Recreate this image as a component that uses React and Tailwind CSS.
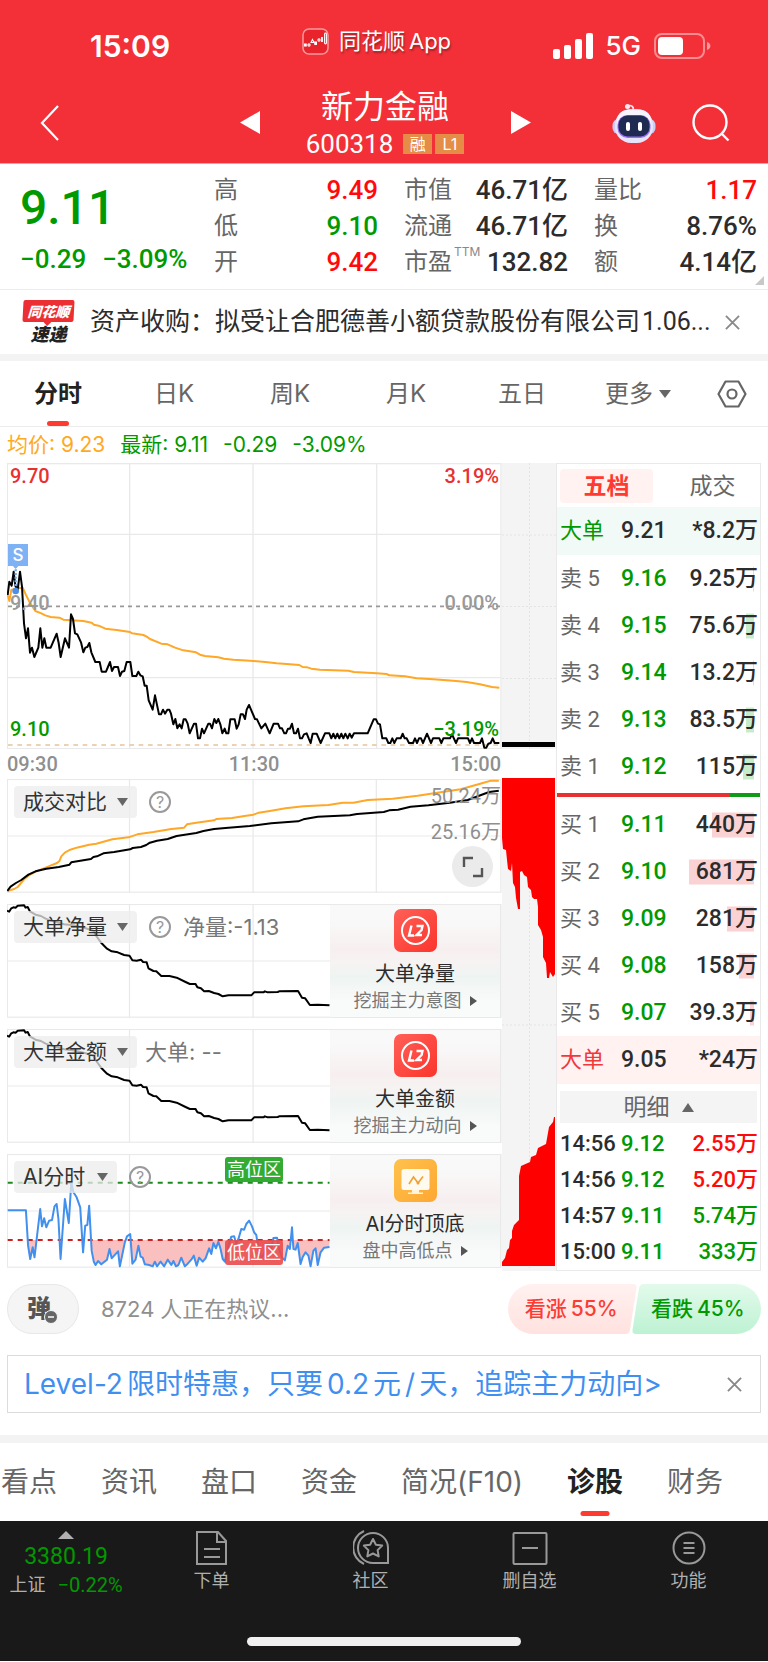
import React from "react";

const NUM = "font-['Roboto','Noto_Sans_CJK_SC',sans-serif]";

const PRICE_LINE =
  "23,420 28,380 35,392 41,350 46,392 53,405 60,350 66,395 72,505 78,550 84,520 90,593 96,578 103,606 115,578 121,520 127,578 133,550 139,578 152,578 170,536 176,564 182,606 195,550 201,564 207,578 213,478 219,492 225,535 232,538 243,562 250,592 256,578 262,576 268,564 274,592 286,621 299,621 305,650 318,650 330,621 336,648 342,636 354,636 360,663 366,650 373,648 380,621 391,621 397,663 409,663 415,650 421,661 428,664 434,692 440,692 446,736 458,764 465,721 477,778 483,778 489,764 495,776 502,764 508,764 513,776 520,808 526,792 532,820 539,808 545,820 551,793 557,793 563,806 569,835 582,806 588,806 594,850 600,850 606,821 612,835 625,806 630,806 636,820 643,792 649,804 655,792 661,808 667,835 674,821 679,835 685,835 691,793 704,793 710,821 716,808 722,778 729,778 735,792 740,764 747,750 753,764 765,792 771,793 784,820 796,806 809,835 821,806 834,806 840,820 846,820 853,835 858,835 864,821 870,821 876,806 882,835 888,835 894,821 900,850 906,850 912,838 920,835 926,850 932,864 938,836 950,836 962,864 975,835 988,835 994,850 1000,836 1006,850 1012,836 1018,850 1024,836 1030,850 1036,836 1043,850 1049,836 1055,848 1062,835 1103,835 1121,793 1128,793 1134,806 1140,808 1147,850 1159,850 1165,864 1171,864 1177,850 1183,864 1190,850 1202,850 1208,836 1214,850 1220,850 1227,864 1239,864 1245,850 1251,864 1257,850 1263,850 1269,864 1281,836 1293,864 1299,850 1318,850 1324,864 1330,850 1350,850 1356,838 1368,864 1374,850 1404,850 1410,864 1416,850 1422,864 1440,864 1446,850 1453,878 1459,878 1465,866 1472,864 1478,850 1484,864 1498,864";
const AVG_LINE =
  "23,420 28,438 34,405 48,400 68,398 78,420 88,440 106,468 124,475 136,481 152,486 178,488 190,494 215,496 250,498 275,503 282,509 296,512 316,521 350,525 390,531 396,535 430,540 440,545 450,552 484,566 503,568 525,578 550,586 588,592 600,599 615,603 655,607 672,611 700,614 750,617 796,621 830,625 860,627 898,630 908,636 922,637 934,641 960,644 1045,647 1062,651 1130,655 1160,657 1168,661 1215,664 1250,670 1300,673 1360,677 1400,681 1440,688 1476,696 1498,698";
const DEAL_BLACK =
  "21,362 30,349 45,338 60,329 80,313 100,303 130,295 165,290 195,283 200,276 255,266 262,260 272,258 290,249 320,245 365,237 372,233 395,230 410,224 420,217 440,211 470,206 495,197 550,188 570,182 600,176 640,172 700,167 760,159 835,153 850,147 890,139 980,135 1000,131 1075,125 1090,120 1115,118 1150,109 1200,105 1260,97 1310,89 1340,77 1370,65 1397,61";
const DEAL_AMBER =
  "21,362 40,356 50,350 68,327 80,316 100,304 130,291 160,278 167,272 172,258 182,247 195,239 215,232 250,223 270,220 315,207 360,201 385,192 430,185 480,176 516,172 524,162 550,157 600,150 606,146 650,143 690,136 710,133 725,127 760,121 800,114 850,108 920,104 960,97 990,97 1030,89 1100,85 1170,76 1220,68 1290,57 1320,48 1350,39 1375,31 1397,31";
const NET_LINE =
  "20,20 26,23 32,13 38,10 44,11 50,5 68,4 72,11 78,9 84,22 100,32 115,36 128,44 150,52 180,61 205,64 240,73 262,80 270,96 285,118 300,134 313,142 330,145 348,153 363,155 371,169 383,170 395,167 401,174 411,175 416,193 430,201 438,202 452,216 475,216 495,221 520,234 532,240 548,240 553,250 563,253 572,262 585,261 600,267 612,270 624,277 640,274 704,274 712,265 738,265 742,262 750,265 778,264 782,262 835,261 846,281 855,283 868,303 890,302 923,304";
const AI_LINE =
  "22,574 73,574 79,680 85,720 92,685 97,715 113,570 118,622 124,598 130,625 138,605 146,603 153,562 159,555 164,600 170,720 182,540 193,612 200,490 206,520 215,535 225,565 233,700 239,620 245,618 250,560 257,695 263,728 268,738 275,726 284,736 291,730 300,722 307,690 313,718 320,710 331,697 336,742 343,706 350,670 356,652 365,645 371,734 380,722 388,680 394,713 400,716 406,736 418,738 428,742 434,728 440,742 450,728 460,742 470,722 480,738 486,726 493,742 500,738 508,716 518,742 526,734 536,722 543,710 551,740 558,716 568,728 576,718 586,688 592,705 598,672 605,688 612,668 618,690 624,720 630,728 640,680 648,653 656,652 662,675 668,660 676,630 684,632 690,615 698,605 706,622 712,640 718,648 724,690 732,720 742,700 750,676 760,690 766,657 776,656 782,690 790,715 798,724 806,680 812,690 818,625 822,690 828,692 834,672 842,735 848,714 856,700 864,710 870,742 878,695 884,688 890,738 898,700 908,686 923,684";
const FLOW_DOWN =
  "502,778 555,778 555,974 553,977 550,972 549,978 547,978 546,963 543,957 543,937 541,930 538,925 538,907 537,899 534,899 532,897 531,890 528,887 527,877 524,875 522,871 520,872 520,909 518,909 516,898 515,887 513,883 512,863 511,871 508,869 507,860 506,850 503,849 502,838";
const FLOW_UP =
  "502,1266 555,1266 555,1117 554,1117 553,1122 549,1127 546,1144 538,1148 536,1155 531,1157 530,1162 521,1166 519,1176 519,1220 517,1222 514,1225 512,1231 512,1238 510,1240 509,1248 507,1250 505,1258 502,1262";

function Line({ points, color, width = 2, dash }) {
  return (
    <polyline points={points} fill="none" stroke={color} strokeWidth={width} strokeDasharray={dash} strokeLinejoin="round" vectorEffect="non-scaling-stroke" />
  );
}

function Triangle({ className, points }) {
  return (
    <svg viewBox="0 0 12 12" preserveAspectRatio="none" className={className} aria-hidden="true">
      <polygon points={points} fill="currentColor" />
    </svg>
  );
}
const DOWN = "0,0 12,0 6,12";
const UP = "0,12 12,12 6,0";
const RIGHT = "0,0 12,6 0,12";
const LEFT = "12,0 12,12 0,6";

function Cross({ className }) {
  return (
    <svg viewBox="0 0 16 16" className={className} fill="none" stroke="currentColor" strokeWidth="2" aria-hidden="true">
      <path d="M1 1 15 15M15 1 1 15" />
    </svg>
  );
}

function Header() {
  return (
    <header className="border-b border-[#f0a5a5] bg-[#f33038] text-white">
      <div className="flex h-[82px] items-center pt-[10px]">
        <div className="flex-1 pl-[90px] font-['Inter',sans-serif] text-[30px] leading-9 font-semibold">15:09</div>
        <div className="flex items-center gap-[10px] pr-12 pb-[10px]">
          <svg viewBox="0 0 27 27" className="size-[27px]" aria-hidden="true">
            <rect x="1" y="1" width="25" height="25" rx="6" fill="#e8232b" stroke="#f79a9d" strokeWidth="1.5" />
            <g fill="none" stroke="#fff" strokeWidth="1.1">
              <rect x="2.6" y="16" width="1.6" height="2" fill="#fff" />
              <circle cx="7" cy="17" r="1.1" />
              <path d="M9 14.5 10.5 11.5 12 14.5Z" />
              <rect x="12.8" y="14" width="1.6" height="2.4" fill="#fff" />
              <circle cx="17" cy="12" r="1.1" />
              <path d="M20 9v5" strokeWidth="1.8" />
              <rect x="22.6" y="5" width="1.8" height="11" rx=".9" />
            </g>
          </svg>
          <span className="flex gap-1 font-['Inter','Noto_Sans_CJK_SC',sans-serif] text-[22px] leading-7 [text-shadow:1px_2px_2px_rgb(0_0_0/0.35)]">
            同花顺<span>App</span>
          </span>
        </div>
        <div className="flex flex-1 items-center justify-end gap-[13px] pr-[57px]">
          <svg viewBox="0 0 40 26" className="h-[26px] w-10" fill="#fff" aria-hidden="true">
            <rect x="0" y="16" width="7" height="10" rx="2" />
            <rect x="11" y="12" width="7" height="14" rx="2" />
            <rect x="22" y="6" width="7" height="20" rx="2" />
            <rect x="33" y="0" width="7" height="26" rx="2" />
          </svg>
          <span className="font-['Inter',sans-serif] text-[26px] leading-8 font-medium">5G</span>
          <svg viewBox="0 0 57 26" className="h-[26px] w-[57px]" aria-hidden="true">
            <rect x="1" y="1" width="49" height="24" rx="7" fill="none" stroke="#fff" strokeOpacity=".45" strokeWidth="2" />
            <rect x="4" y="4" width="25" height="18" rx="4" fill="#fff" />
            <path d="M53 9c2.4.8 3.4 2.2 3.4 4s-1 3.200-3.400 4z" fill="#fff" fillOpacity=".5" />
          </svg>
        </div>
      </div>
      <div className="flex h-[81px] items-center">
        <div className="flex-1 pl-10">
          <button type="button" aria-label="返回" className="block">
            <svg viewBox="0 0 19 36" className="h-9 w-[19px]" fill="none" stroke="#fff" strokeWidth="2.200">
              <path d="M18 1 2 18 18 35" />
            </svg>
          </button>
        </div>
        <button type="button" aria-label="上一只">
          <Triangle points={LEFT} className="h-[23px] w-5" />
        </button>
        <div className="flex w-[251px] flex-col items-center gap-[2px]">
          <h1 className="font-['Noto_Sans_CJK_SC',sans-serif] text-[32px] leading-10">新力金融</h1>
          <div className="flex items-center gap-[10px]">
            <span className={`${NUM} text-[26px] leading-9`}>600318</span>
            <span className="flex gap-[3px] font-['Inter','Noto_Sans_CJK_SC',sans-serif] text-base leading-5">
              <span className="w-[29px] bg-[#e58c47] text-center">融</span>
              <span className="w-[29px] bg-[#e58c47] text-center">L1</span>
            </span>
          </div>
        </div>
        <button type="button" aria-label="下一只">
          <Triangle points={RIGHT} className="h-[23px] w-5" />
        </button>
        <div className="flex flex-1 items-center justify-end gap-9 pr-[38px]">
          <button type="button" aria-label="智能助手">
            <svg viewBox="0 0 44 40" className="h-10 w-11">
              <path d="M15 3.500C19 1.500 21.500 3 21.500 7" fill="none" stroke="#f3dfee" strokeWidth="1.800" />
              <circle cx="15.500" cy="3.500" r="2.500" fill="#fbe9f2" />
              <rect x=".5" y="16" width="43" height="15" rx="6" fill="#c9cdf3" />
              <rect x="3" y="6" width="38" height="34" rx="16" fill="#e6e4fa" />
              <rect x="5" y="7" width="34" height="20" rx="10" fill="#f8f4fd" />
              <rect x="5.500" y="12" width="33" height="23" rx="10" fill="#9a6df0" />
              <rect x="6.500" y="12.500" width="31" height="21" rx="9" fill="#1e2a50" />
              <rect x="14" y="19" width="4" height="9" rx="2" fill="#fff" />
              <rect x="26" y="19" width="4" height="9" rx="2" fill="#fff" />
            </svg>
          </button>
          <button type="button" aria-label="搜索">
            <svg viewBox="0 0 38 38" className="size-[38px]" fill="none" stroke="#fff" strokeWidth="2.400">
              <circle cx="18" cy="18" r="16.500" />
              <path d="M29.500 29.500 36.500 36.500" />
            </svg>
          </button>
        </div>
      </div>
    </header>
  );
}

function StatColumn({ items, className }) {
  return (
    <dl className={className}>
      {items.map(([label, value, color, note]) => (
        <div key={label} className="flex h-9 items-center justify-between">
          <dt className="flex text-2xl leading-9 text-[#666]">
            {label}
            {note && <sup className="top-0 pl-[2px] text-xs leading-4 text-[#888]">{note}</sup>}
          </dt>
          <dd className={`${NUM} text-[26px] leading-9 font-medium ${color}`}>{value}</dd>
        </div>
      ))}
    </dl>
  );
}

function Quote() {
  const red = "text-[#ff0a0a]";
  const green = "text-[#009a00]";
  const ink = "text-[#2c2c2c]";
  return (
    <section className="relative flex border-b border-[#ececec] pt-2 pr-[11px] pb-[9px] pl-5">
      <div className={`w-[194px] text-[#009a00] ${NUM}`}>
        <p className="pt-[9px] text-[48px] leading-[54px] font-medium">9.11</p>
        <p className="pt-[6px] text-[26px] leading-9 font-medium">
          <span className="pr-4">−0.29</span>
          <span>−3.09%</span>
        </p>
      </div>
      <StatColumn className="w-[164px]" items={[["高", "9.49", red], ["低", "9.10", green], ["开", "9.42", red]]} />
      <StatColumn className="ml-[26px] w-[164px]" items={[["市值", "46.71亿", ink], ["流通", "46.71亿", ink], ["市盈", "132.82", ink, "TTM"]]} />
      <StatColumn className="ml-[26px] flex-1" items={[["量比", "1.17", red], ["换", "8.76%", ink], ["额", "4.14亿", ink]]} />
      <Triangle points="12,0 12,12 0,12" className="absolute right-1 bottom-1 size-[9px] text-[#c8c8c8]" />
    </section>
  );
}

function News() {
  return (
    <section className="flex h-16 items-center pr-7 pl-[22px]">
      <a href="#news" className="flex min-w-0 flex-1 items-center gap-[15px]">
        <span className="flex w-[53px] shrink-0 flex-col items-center font-['Noto_Sans_CJK_SC',sans-serif] font-black italic">
          <span className="relative w-[51px] -skew-x-3 rounded-[2px] bg-[#ec2f33] text-center text-[14px] leading-[22px] text-white">
            同花顺
            <Triangle points={DOWN} className="absolute top-[22px] left-[21px] h-1 w-2 text-[#ec2f33]" />
          </span>
          <span className="text-[18px] leading-[23px] text-[#222]">速递</span>
        </span>
        <span className={`text-[25px] leading-9 whitespace-nowrap text-[#2c2c2c] ${NUM}`}>
          资产收购：拟受让合肥德善小额贷款股份有限公司<span className="pl-[2px]">1.06...</span>
        </span>
      </a>
      <button type="button" aria-label="关闭资讯" className="text-[#8a8a8a]">
        <Cross className="size-[15px]" />
      </button>
    </section>
  );
}

function PeriodTabs() {
  return (
    <nav className="box-content flex h-[65px] items-stretch border-t-[7px] border-b border-t-[#f3f3f3] border-b-[#ececec] text-2xl text-[#666]">
      {["分时", "日K", "周K", "月K", "五日"].map((t, i) => (
        <button key={t} type="button" className={i === 0 ? "relative flex-1 font-bold text-[#222]" : "flex-1"}>
          {t}
          {i === 0 && <span className="absolute bottom-0 left-1/2 h-[5px] w-[22px] -translate-x-1/2 rounded-full bg-[#ff3a30]" />}
        </button>
      ))}
      <button type="button" className="flex flex-1 items-center justify-center gap-[6px]">
        更多
        <Triangle points={DOWN} className="h-2 w-3" />
      </button>
      <button type="button" aria-label="图表设置" className="flex w-[72px] items-center justify-center">
        <svg viewBox="0 0 30 28" className="h-7 w-[30px]" fill="none" stroke="#666" strokeWidth="2.200" strokeLinejoin="round">
          <path d="M8.500 1.500h13L28.500 14l-7 12.500h-13L1.500 14Z" />
          <circle cx="15" cy="14" r="4.500" />
        </svg>
      </button>
    </nav>
  );
}

function MainChart() {
  return (
    <div className={`relative h-[286px] text-[20px] leading-6 font-medium ${NUM}`}>
      <svg viewBox="21 24 1485 858" preserveAspectRatio="none" className="absolute inset-0 size-full" aria-hidden="true">
        <g stroke="#e9e9e9" strokeWidth="4" fill="none">
          <rect x="22" y="26" width="1481" height="855" />
          <path d="M389 24V882M759 24V882M1130 24V882M21 238H1503M21 668H1503" />
        </g>
        <path d="M24 454H1500" stroke="#999" strokeWidth="5" strokeDasharray="12 12" />
        <path d="M24 870H1500" stroke="#e6c49c" strokeWidth="4" strokeDasharray="14 14" />
        <Line points={AVG_LINE} color="#ffa726" />
        <Line points={PRICE_LINE} color="#000" />
        <path d="M47 332V400" stroke="#6fa8f0" strokeWidth="7" strokeDasharray="6 5" />
        <path d="M38 332h18l-9 10Z" fill="#7fb2f5" />
        <circle cx="47" cy="408" r="10" fill="#4c8ee8" />
      </svg>
      <span className="absolute top-[81px] left-[1px] h-[22px] w-5 bg-[#7fb2f5] text-center font-['Inter',sans-serif] text-[17px] leading-[22px] text-white">S</span>
      <div className="relative flex h-full flex-col justify-between pt-[1px] pr-[3px] pb-2 pl-[3px]">
        <div className="flex justify-between text-[#e93030]"><span>9.70</span><span>3.19%</span></div>
        <div className="flex justify-between text-[#999]"><span>9.40</span><span>0.00%</span></div>
        <div className="flex justify-between text-[#009a00]"><span>9.10</span><span>−3.19%</span></div>
      </div>
    </div>
  );
}

function PanelFrame({ box, children }) {
  return (
    <svg viewBox={box} preserveAspectRatio="none" className="absolute inset-0 size-full" aria-hidden="true">
      {children}
    </svg>
  );
}

function GridLines({ top }) {
  return (
    <g transform={`translate(0 ${top})`} stroke="#e9e9e9" strokeWidth="3.500" fill="none">
      <rect x="21" y="1.500" width="1382" height="338" />
      <path d="M363 0V342M709 0V342M1054 0V342M20 171H1403" />
    </g>
  );
}

function IndicatorSelect({ label, name, wide = true }) {
  return (
    <label className={`relative block h-8 ${wide ? "w-[123px]" : "w-[103px]"}`}>
      <select aria-label={name} className="size-full appearance-none rounded-[4px] bg-[#ececec]/75 pl-[9px] text-[21px] leading-8 text-[#333]">
        <option>{label}</option>
      </select>
      <Triangle points={DOWN} className="pointer-events-none absolute top-3 right-[9px] h-2 w-[11px] text-[#666]" />
    </label>
  );
}

function Help() {
  return (
    <button type="button" aria-label="说明" className="size-[22px] rounded-full border-2 border-[#999] text-center text-base leading-[18px] text-[#999]">
      ?
    </button>
  );
}

function L2Icon() {
  return (
    <svg viewBox="0 0 43 43" className="size-[43px]" aria-hidden="true">
      <defs>
        <linearGradient id="l2" x1="0" y1="0" x2="1" y2="1">
          <stop offset="0" stopColor="#ff6058" />
          <stop offset="1" stopColor="#fb352c" />
        </linearGradient>
      </defs>
      <rect width="43" height="43" rx="7" fill="url(#l2)" />
      <circle cx="21.500" cy="21.500" r="13.500" fill="none" stroke="#fff" strokeWidth="2" />
      <path d="M17.500 16.500 15 26.500H20M22.500 17H28.500L27.600 21 22.500 26H28" fill="none" stroke="#fff" strokeWidth="2.400" />
    </svg>
  );
}

function AiIcon() {
  return (
    <svg viewBox="0 0 43 43" className="size-[43px]" aria-hidden="true">
      <defs>
        <linearGradient id="ai" x1="0" y1="0" x2="1" y2="1">
          <stop offset="0" stopColor="#ffc24c" />
          <stop offset="1" stopColor="#fda733" />
        </linearGradient>
      </defs>
      <rect width="43" height="43" rx="7" fill="url(#ai)" />
      <rect x="7.500" y="10" width="28" height="21" rx="2.500" fill="#fffaf0" />
      <path d="M18 31h7v2.500h4V35H14v-1.500h4Z" fill="#fff3dc" />
      <path d="m15 25 4.500-7 4.500 6 5-6.500" fill="none" stroke="#f0a030" strokeWidth="1.600" />
      <circle cx="24" cy="24" r="1.500" fill="#f0a030" />
    </svg>
  );
}

function Promo({ icon, title, sub }) {
  return (
    <a
      href="#level2"
      className="relative flex w-[171px] shrink-0 flex-col items-center border border-l-0 border-[#e9e9e9] bg-[linear-gradient(to_bottom,#f9f9f9_12%,#f7efef_40%,#f6f3f2_52%,#eef4f2_64%,#f9fafa_86%)] pt-1"
    >
      {icon}
      <span className="pt-2 text-[20px] leading-7 text-[#2c2c2c]">{title}</span>
      <span className="flex items-center gap-2 text-[18px] leading-[26px] text-[#777]">
        {sub}
        <Triangle points={RIGHT} className="h-[10px] w-[7px] text-[#555]" />
      </span>
    </a>
  );
}

function FlowPanel({ label, name, extra, help, title, sub }) {
  return (
    <div className="relative flex h-[114px] pr-[1px]">
      <PanelFrame box="20 0 1386 342">
        <GridLines top={0} />
        <Line points={NET_LINE} color="#000" />
      </PanelFrame>
      <div className="relative flex flex-1 items-start pt-[7px] pl-[7px]">
        <IndicatorSelect label={label} name={name} />
        <div className="flex h-8 items-center gap-3 pl-2 text-[22px] text-[#777]">
          {help && <span className="flex pl-1"><Help /></span>}
          <span>{extra}</span>
        </div>
      </div>
      <Promo icon={<L2Icon />} title={title} sub={sub} />
    </div>
  );
}

function Charts() {
  return (
    <div className="min-w-0 flex-1">
      <MainChart />
      <div className={`flex h-[30px] items-center justify-between pr-[1px] text-[20px] font-medium text-[#8f8f8f] ${NUM}`}>
        <span>09:30</span>
        <span>11:30</span>
        <span>15:00</span>
      </div>
      <div className="flex flex-col gap-[11px]">
        <div className="relative flex h-[114px] justify-between pt-[7px] pr-[1px] pl-[7px]">
          <PanelFrame box="20 26 1386 342">
            <GridLines top={26} />
            <Line points={DEAL_AMBER} color="#ffa726" />
            <Line points={DEAL_BLACK} color="#000" />
          </PanelFrame>
          <div className="relative flex h-8 items-center gap-3">
            <IndicatorSelect label="成交对比" name="指标一" />
            <Help />
          </div>
          <div className={`relative flex flex-col items-end text-[20px] text-[#8f8f8f] ${NUM}`}>
            <span className="h-[34px] leading-5">50.24万</span>
            <span className="h-[25px] leading-[25px]">25.16万</span>
            <button type="button" aria-label="全屏" className="mt-[1px] mr-2 flex size-[41px] shrink-0 items-center justify-center rounded-full bg-[#ebebeb]">
              <svg viewBox="0 0 22 22" className="size-[22px]" fill="none" stroke="#555" strokeWidth="2.400">
                <path d="M2 11V2h9M20 12v8h-9" />
              </svg>
            </button>
          </div>
        </div>
        <FlowPanel label="大单净量" name="指标二" help extra="净量:-1.13" title="大单净量" sub="挖掘主力意图" />
        <FlowPanel label="大单金额" name="指标三" extra="大单: --" title="大单金额" sub="挖掘主力动向" />
        <div className="relative flex h-[114px] pr-[1px]">
          <PanelFrame box="20 405 1386 342">
            <clipPath id="low"><rect x="20" y="663" width="904" height="82" /></clipPath>
            <GridLines top={405} />
            <polygon points={`22,663 ${AI_LINE} 923,663`} fill="#f26666" fillOpacity=".42" clipPath="url(#low)" />
            <Line points="22,491 923,491" color="#1d8a1d" dash="5 5" />
            <Line points="22,663 923,663" color="#d01f1f" dash="5 5" />
            <Line points={AI_LINE} color="#4290ee" />
          </PanelFrame>
          <div className="relative flex flex-1 items-start pt-[7px] pl-[7px]">
            <div className="flex h-8 items-center gap-3">
              <IndicatorSelect label="AI分时" name="指标四" wide={false} />
              <Help />
            </div>
            <span className="absolute top-[3px] left-[218px] rounded-[3px] bg-[#33ab33] px-[2px] text-[18px] leading-[25px] text-white">高位区</span>
            <span className="absolute top-[86px] left-[218px] rounded-[3px] bg-[#ea4a4a]/90 px-[2px] text-[18px] leading-[25px] text-white">低位区</span>
          </div>
          <Promo icon={<AiIcon />} title="AI分时顶底" sub="盘中高低点" />
        </div>
      </div>
    </div>
  );
}

function FlowStrip() {
  return (
    <svg viewBox="502 463 54 808" preserveAspectRatio="none" className="w-[54px] shrink-0 self-stretch" aria-hidden="true">
      <rect x="502" y="463" width="54" height="808" fill="#f4f4f4" />
      <path d="M529.500 463V1268M502 535H556M502 606.500H556M502 678.500H556M502 1025H556" stroke="#e4e4e4" strokeDasharray="2 2" />
      <rect x="502" y="749" width="54" height="29" fill="#fff" />
      <rect x="502" y="742" width="53" height="5" fill="#000" />
      <polygon points={FLOW_DOWN} fill="#f00" />
      <polygon points={FLOW_UP} fill="#f00" />
    </svg>
  );
}

const SELLS = [
  ["卖 5", "9.16", "9.25万", "w-px"],
  ["卖 4", "9.15", "75.6万", "w-2"],
  ["卖 3", "9.14", "13.2万", "w-px"],
  ["卖 2", "9.13", "83.5万", "w-2"],
  ["卖 1", "9.12", "115万", "w-[11px]"],
];
const BUYS = [
  ["买 1", "9.11", "440万", "w-[42px]"],
  ["买 2", "9.10", "681万", "w-[65px]"],
  ["买 3", "9.09", "281万", "w-[27px]"],
  ["买 4", "9.08", "158万", "w-[15px]"],
  ["买 5", "9.07", "39.3万", "w-1"],
];
const TRADES = [
  ["14:56", "9.12", "2.55万", "text-[#ff0a0a]"],
  ["14:56", "9.12", "5.20万", "text-[#ff0a0a]"],
  ["14:57", "9.11", "5.74万", "text-[#009a00]"],
  ["15:00", "9.11", "333万", "text-[#009a00]"],
];

function BookRow({ label, price, volume, bar, barColor, rowClass = "h-[47px]", labelClass = "text-[#666]", priceClass = "text-[#009a00]" }) {
  return (
    <tr className={rowClass}>
      <th scope="row" className={`w-16 p-0 pl-[3px] text-left text-[22px] font-normal ${labelClass}`}>{label}</th>
      <td className={`w-14 p-0 ${priceClass}`}>{price}</td>
      <td className="relative p-0 pr-[2px] text-right text-[#2c2c2c]">
        {bar && <span className={`absolute top-1/2 right-[6px] h-[25px] -translate-y-1/2 ${bar} ${barColor}`} />}
        <span className="relative">{volume}</span>
      </td>
    </tr>
  );
}

function OrderBook() {
  const table = `w-full table-fixed border-collapse whitespace-nowrap text-[23px] leading-8 font-medium ${NUM}`;
  return (
    <aside className="w-[205px] shrink-0 border border-[#e9e9e9]">
      <div className="flex h-[43px] items-center pl-[3px] text-[23px] leading-[34px]">
        <button type="button" className="w-[93px] rounded-[4px] bg-[#fff2f1] font-bold text-[#ff3a30]">五档</button>
        <button type="button" className="flex-1 pl-3 text-[#666]">成交</button>
      </div>
      <table className={table}>
        <tbody>
          <BookRow label="大单" price="9.21" volume="*8.2万" rowClass="h-12 bg-[#f2faf7]" labelClass="text-[#009a00]" priceClass="text-[#2c2c2c]" />
          {SELLS.map(([l, p, v, b]) => <BookRow key={l} label={l} price={p} volume={v} bar={b} barColor="bg-[#c8ebc9]" />)}
        </tbody>
      </table>
      <div className="mt-[3px] mb-1 flex h-1">
        <div className="w-[85%] bg-[#e93030]" />
        <div className="flex-1 bg-[#0f9a17]" />
      </div>
      <table className={table}>
        <tbody>
          {BUYS.map(([l, p, v, b]) => <BookRow key={l} label={l} price={p} volume={v} bar={b} barColor="bg-[#fbd2d4]" />)}
          <BookRow label="大单" price="9.05" volume="*24万" rowClass="h-12 bg-[#fff2f1]" labelClass="text-[#f03a3a]" priceClass="text-[#2c2c2c]" />
        </tbody>
      </table>
      <button type="button" className="mx-[3px] mt-[7px] flex h-8 w-[197px] items-center justify-center gap-3 bg-[#f4f4f4] text-[23px] leading-8 text-[#666]">
        明细
        <Triangle points={UP} className="h-[9px] w-3" />
      </button>
      <table className={`mt-[3px] w-full table-fixed border-collapse whitespace-nowrap text-[22px] leading-8 font-medium ${NUM}`}>
        <tbody>
          {TRADES.map(([t, p, v, c], i) => (
            <tr key={i} className="h-9">
              <th scope="row" className="w-16 p-0 pl-[3px] text-left font-medium text-[#2c2c2c]">{t}</th>
              <td className="w-14 p-0 text-[#009a00]">{p}</td>
              <td className={`p-0 pr-[2px] text-right ${c}`}>{v}</td>
            </tr>
          ))}
        </tbody>
      </table>
    </aside>
  );
}

function Discussion() {
  return (
    <section className="mt-[13px] flex h-[50px] items-center px-[7px]">
      <button type="button" aria-label="弹幕" className="relative h-[50px] w-[72px] rounded-full border border-[#e8e8e8] bg-[#f5f5f5]">
        <span className="block pr-2 text-2xl leading-[46px] font-black text-[#555]">弹</span>
        <svg viewBox="0 0 14 14" className="absolute top-[25px] left-[36px] size-[14px]" aria-hidden="true">
          <circle cx="7" cy="7" r="6.500" fill="#666" stroke="#f5f5f5" />
          <path d="M4 7h6" stroke="#fff" strokeWidth="1.500" />
        </svg>
      </button>
      <p className="flex-1 pl-[22px] text-[22px] text-[#8f8f8f]"><span className="pr-[6px]">8724</span>人正在热议...</p>
      <div className="relative flex h-[50px] w-[253px] text-[21px]">
        <svg viewBox="0 0 253 50" preserveAspectRatio="none" className="absolute inset-0 size-full" aria-hidden="true">
          <defs>
            <linearGradient id="up" x1="0" y1="0" x2="0" y2="1"><stop offset="0" stopColor="#fff1f0" /><stop offset="1" stopColor="#ffe2df" /></linearGradient>
            <linearGradient id="dn" x1="0" y1="0" x2="0" y2="1"><stop offset="0" stopColor="#e3faeb" /><stop offset="1" stopColor="#bdf2d3" /></linearGradient>
          </defs>
          <path d="M25 0H125Q129 0 128.500 4L122 46Q121 50 117 50H25A25 25 0 0 1 25 0Z" fill="url(#up)" />
          <path d="M136 0H228A25 25 0 0 1 228 50H128Q124 50 124.500 46L131 4Q132 0 136 0Z" fill="url(#dn)" />
        </svg>
        <button type="button" className="relative flex-1 font-medium text-[#fb3c34]">看涨<span className="pl-1">55%</span></button>
        <button type="button" className="relative flex-1 font-medium text-[#009a00]">看跌<span className="pl-1">45%</span></button>
      </div>
    </section>
  );
}

function Banner() {
  return (
    <section className="mx-[7px] mt-[21px] flex h-[58px] items-center border border-[#dcdcdc] pr-[18px] pl-4">
      <a href="#offer" className="flex-1 text-[28px] leading-10 whitespace-nowrap text-[#3f8ff0]">
        <span className="pr-1">Level-2</span>限时特惠，只要<span className="px-1">0.2</span>元<span className="px-1">/</span>天，追踪主力动向&gt;
      </a>
      <button type="button" aria-label="关闭广告" className="text-[#888]">
        <Cross className="size-[15px]" />
      </button>
    </section>
  );
}

function SectionTabs() {
  return (
    <nav className="mt-[22px] flex h-[86px] gap-11 overflow-hidden border-t-8 border-[#f3f3f3] pl-[1px] text-[28px] text-[#666]">
      {["看点", "资讯", "盘口", "资金", "简况(F10)", "诊股", "财务"].map((t) => (
        <button key={t} type="button" className={t === "诊股" ? "relative shrink-0 font-bold text-[#222]" : "shrink-0"}>
          {t}
          {t === "诊股" && <span className="absolute bottom-[5px] left-1/2 h-[5px] w-[29px] -translate-x-1/2 rounded-full bg-[#ff3a30]" />}
        </button>
      ))}
    </nav>
  );
}

function BottomItem({ label, children }) {
  return (
    <button type="button" className="flex flex-1 flex-col items-center pt-[9px] text-[18px] leading-[26px]">
      <svg viewBox="0 0 36 36" className="size-9" fill="none" stroke="#999" strokeWidth="2" aria-hidden="true">{children}</svg>
      <span className="pt-[2px]">{label}</span>
    </button>
  );
}

function BottomBar() {
  return (
    <footer className="bg-[#191919] text-[#b0b0b0]">
      <div className="flex h-[116px] items-start">
        <button type="button" className="flex w-[132px] flex-col items-center pt-[10px]">
          <Triangle points={UP} className="h-2 w-4" />
          <span className={`pt-1 text-[23px] leading-[27px] text-[#009a00] ${NUM}`}>3380.19</span>
          <span className="flex items-center gap-3 text-[18px] leading-[30px]">
            上证<span className={`text-[20px] text-[#009a00] ${NUM}`}>−0.22%</span>
          </span>
        </button>
        <BottomItem label="下单">
          <path d="M3 2H24L32 11V34H3ZM23 2V12H32M10 19H26M10 27H26" />
        </BottomItem>
        <BottomItem label="社区">
          <path d="M35 33H20A15 15 0 1 1 35 18ZM11 34A18 18 0 0 1 11 1" />
          <path d="m20 9 2.900 5.700 6.300.9-4.600 4.500 1.100 6.300L20 23.500l-5.700 2.900 1.100-6.300-4.600-4.500 6.300-.9Z" strokeLinejoin="round" />
        </BottomItem>
        <BottomItem label="删自选">
          <rect x="1.500" y="3" width="33" height="31" rx="1" />
          <path d="M10 18H26" />
        </BottomItem>
        <BottomItem label="功能">
          <circle cx="18" cy="18" r="15.500" />
          <path d="M12.500 13H23.500M12.500 18H23.500M12.500 23H23.500" />
        </BottomItem>
      </div>
      <div className="flex h-6 justify-center">
        <div className="h-[9px] w-[274px] rounded-full bg-[#f0f0f0]" />
      </div>
    </footer>
  );
}

export default function App() {
  return (
    <div className="min-h-screen bg-white font-['Inter','Noto_Sans_CJK_SC',sans-serif]">
      <Header />
      <main>
        <Quote />
        <News />
        <PeriodTabs />
        <p className="flex h-9 items-center gap-[15px] px-[7px] text-[21px] text-[#009a00]">
          <span className="text-[#ffaa1e]">均价: 9.23</span>
          <span>最新: 9.11</span>
          <span>-0.29</span>
          <span>-3.09%</span>
        </p>
        <div className="flex px-[7px]">
          <Charts />
          <FlowStrip />
          <OrderBook />
        </div>
        <Discussion />
        <Banner />
        <SectionTabs />
      </main>
      <BottomBar />
    </div>
  );
}
